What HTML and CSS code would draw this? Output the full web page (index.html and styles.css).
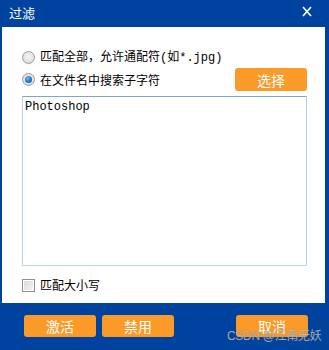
FILE: index.html
```html
<!DOCTYPE html>
<html lang="zh">
<head>
<meta charset="utf-8">
<link rel="stylesheet" href="styles.css">
</head>
<body>
<div class="dialog">
  <div class="titlebar">
    <span class="title">过滤</span>
    <span class="close">
      <svg width="10" height="11" viewBox="0 0 10 11"><path d="M1 1 L9 10 M9 1 L1 10" stroke="#fff" stroke-width="1.6" fill="none"/></svg>
    </span>
  </div>
  <div class="content">
    <label class="row row1">
      <span class="radio"></span>
      <span class="label">匹配全部，允许通配符(如*.jpg)</span>
    </label>
    <div class="row row2">
      <label class="opt">
        <span class="radio checked"></span>
        <span class="label">在文件名中搜索子字符</span>
      </label>
      <button class="btn">选择</button>
    </div>
    <div class="textbox">Photoshop</div>
    <label class="row row3">
      <span class="check"></span>
      <span class="label">匹配大小写</span>
    </label>
  </div>
  <div class="footer">
    <button class="btn">激活</button>
    <button class="btn">禁用</button>
    <button class="btn cancel">取消</button>
    <span class="watermark">CSDN @江南无妖</span>
  </div>
</div>
</body>
</html>
```

FILE: styles.css
```css
* { box-sizing: border-box; }
html, body { margin: 0; padding: 0; }
body {
  width: 329px;
  height: 350px;
  background: #ffffff;
  font-family: "Noto Sans CJK SC", "Liberation Sans", sans-serif;
  font-size: 12px;
  color: #000;
}
.dialog {
  position: relative;
  width: 329px;
  height: 350px;
  background: #00439e;
  display: flex;
  flex-direction: column;
  padding: 0 4px 0 2px;
}
.titlebar {
  height: 27px;
  display: flex;
  align-items: center;
  justify-content: space-between;
  padding: 0 13px 2px 7px;
  color: #fff;
}
.title { font-size: 13px; line-height: 14px; }
.close { display: flex; margin-top: -2px; }
.content {
  background: #fff;
  height: 276px;
  display: flex;
  flex-direction: column;
  padding: 20px 18px 0 20px;
}
.row { display: flex; align-items: center; }
.row1 { height: 21px; }
.row2 { height: 23px; justify-content: space-between; }
.opt { display: flex; align-items: center; }
.label { line-height: 14px; white-space: nowrap; }
.row1 .label { font-family: "Liberation Mono", "Noto Sans CJK SC", monospace; }
.radio {
  width: 13px; height: 13px;
  border-radius: 50%;
  border: 1px solid #9a9a9a;
  background: radial-gradient(circle at 50% 40%, #f4f4f4 0%, #d6d6d6 100%);
  margin-right: 5px;
  position: relative;
}
.radio.checked::after {
  content: "";
  position: absolute;
  left: 2px; top: 2px;
  width: 7px; height: 7px;
  border-radius: 50%;
  background: radial-gradient(circle at 40% 35%, #6fb8f0 0%, #1a6fc6 60%, #0b4f9e 100%);
}
.check {
  width: 13px; height: 13px;
  border: 1px solid #8f8f8f;
  background: linear-gradient(135deg, #d8d8d8 0%, #f4f4f4 100%);
  box-shadow: inset 0 0 0 1px #fff;
  margin-right: 5px;
}
.btn {
  width: 72px;
  height: 23px;
  border: none;
  border-radius: 3px;
  background: #fa9a28;
  color: #fff;
  font-family: "Noto Sans CJK SC", sans-serif;
  font-size: 14px;
  line-height: 16px;
  padding: 0;
}
.textbox {
  margin-top: 5px;
  height: 170px;
  border: 1px solid #b9d3ee;
  border-top-color: #7fa6d2;
  font-family: "Liberation Mono", monospace;
  font-size: 12px;
  line-height: 14px;
  padding: 3px 2px;
}
.row3 { height: 20px; margin-top: 9px; }
.footer {
  flex: 1;
  display: flex;
  align-items: flex-start;
  padding: 12px 17px 0 22px;
  gap: 6px;
}
.footer .btn { height: 22px; }
.footer .cancel { margin-left: auto; }
.watermark {
  position: absolute;
  left: 227px;
  top: 326px;
  font-family: "Liberation Sans", "Noto Sans CJK SC", sans-serif;
  font-size: 12px;
  letter-spacing: -0.3px;
  color: rgba(200, 200, 200, 0.75);
  text-shadow: 0 0 1px rgba(80,80,80,0.6);
  white-space: nowrap;
}
```
